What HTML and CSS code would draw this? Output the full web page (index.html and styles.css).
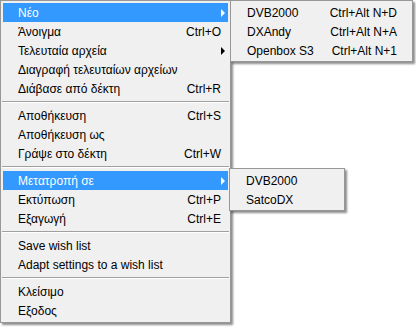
FILE: index.html
```html
<!DOCTYPE html>
<html>
  <head>
    <title>Menu</title>
    <link rel="stylesheet" href="styles.css">
  </head>
  <body>
    <div class="screen">
      <div class="menu main-menu">
        <div class="item active"><span>Νέο</span><span class="arrow"></span></div>
        <div class="item"><span>Άνοιγμα</span><span class="key">Ctrl+O</span></div>
        <div class="item"><span>Τελευταία αρχεία</span><span class="arrow"></span></div>
        <div class="item"><span>Διαγραφή τελευταίων αρχείων</span></div>
        <div class="item"><span>Διάβασε από δέκτη</span><span class="key">Ctrl+R</span></div>
        <div class="sep"></div>
        <div class="item"><span>Αποθήκευση</span><span class="key">Ctrl+S</span></div>
        <div class="item"><span>Αποθήκευση ως</span></div>
        <div class="item"><span>Γράψε στο δέκτη</span><span class="key">Ctrl+W</span></div>
        <div class="sep"></div>
        <div class="item active"><span>Μετατροπή σε</span><span class="arrow"></span></div>
        <div class="item"><span>Εκτύπωση</span><span class="key">Ctrl+P</span></div>
        <div class="item"><span>Εξαγωγή</span><span class="key">Ctrl+E</span></div>
        <div class="sep"></div>
        <div class="item"><span>Save wish list</span></div>
        <div class="item"><span>Adapt settings to a wish list</span></div>
        <div class="sep"></div>
        <div class="item"><span>Κλείσιμο</span></div>
        <div class="item"><span>Εξοδος</span></div>
      </div>

      <!-- υπομενού "Νέο" -->
      <div class="menu submenu sub-new">
        <div class="item"><span>DVB2000</span><span class="key">Ctrl+Alt N+D</span></div>
        <div class="item"><span>DXAndy</span><span class="key">Ctrl+Alt N+A</span></div>
        <div class="item"><span>Openbox S3</span><span class="key">Ctrl+Alt N+1</span></div>
      </div>

      <!-- υπομενού "Μετατροπή σε" -->
      <div class="menu submenu sub-convert">
        <div class="item"><span>DVB2000</span></div>
        <div class="item"><span>SatcoDX</span></div>
      </div>
    </div>
  </body>
</html>
```
FILE: styles.css
```css
body {
  margin: 0;
  background-color: #fff;
  font-family: "Liberation Sans", Arial, sans-serif;
  font-size: 12px;
  color: #000;
}

.screen {
  position: relative;
  width: 416px;
  height: 327px;
}

.menu {
  box-sizing: border-box;
  background-color: #f0f0f0;
  border: 1px solid #979797;
  box-shadow: 2px 2px 2px rgba(0, 0, 0, 0.45);
  padding: 2px 2px 2px 2px;
}

.main-menu {
  width: 231px;
}

.item {
  display: flex;
  justify-content: space-between;
  align-items: center;
  height: 19px;
  padding: 0 7px 0 15px;
  white-space: nowrap;
}

.item.active {
  background-color: #3399ff;
  color: #fff;
}

.arrow {
  width: 0;
  height: 0;
  margin-right: -4px;
  border-top: 4px solid transparent;
  border-bottom: 4px solid transparent;
  border-left: 4px solid #000;
}

.item.active .arrow {
  border-left-color: #fff;
}

.sep {
  height: 8px;
  display: flex;
  flex-direction: column;
  justify-content: center;
}

.sep::before {
  content: "";
  display: block;
  border-top: 1px solid #a0a0a0;
  border-bottom: 1px solid #fff;
  margin: 0 -1px;
}

.submenu {
  position: absolute;
  padding: 2px 2px 1px 2px;
}

.submenu .item {
  padding: 0 13px 0 14px;
}

.sub-new {
  left: 230px;
  top: 0;
  width: 183px;
}

.sub-convert {
  left: 229px;
  top: 168px;
  width: 116px;
}
```
